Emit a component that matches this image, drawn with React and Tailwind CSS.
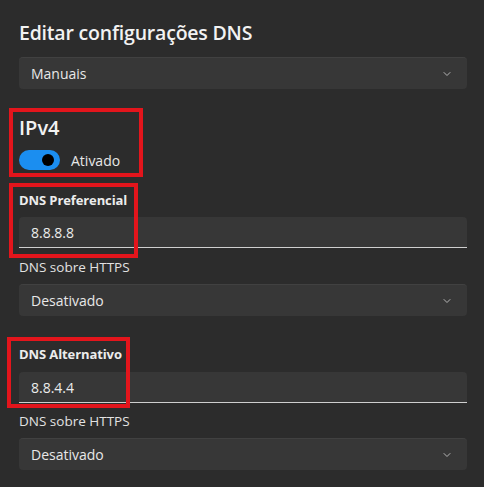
import { ChevronDown } from "lucide-react";

const font = { fontFamily: '"Open Sans", "Noto Sans", sans-serif' };

const Select = ({ value, className = "" }) => (
  <div
    className={`flex h-[32px] items-center justify-between rounded-[4px] border-t border-[#414141] bg-[#373737] pl-[12px] pr-[14px] text-[14px] text-[#e8e8e8] ${className}`}
  >
    <span>{value}</span>
    <ChevronDown size={12} strokeWidth={2} className="text-[#b5b5b5]" />
  </div>
);

const Field = ({ value, className = "" }) => (
  <div
    className={`flex h-[31px] items-center rounded-t-[4px] border-b border-[#cfcfcf] bg-[#373737] pl-[12px] text-[14px] text-[#ececec] ${className}`}
  >
    {value}
  </div>
);

// red annotation frames drawn over the screenshot
const Mark = ({ className }) => (
  <div className={`pointer-events-none absolute border-[4px] border-[#e3151c] ${className}`} />
);

export default function App() {
  return (
    <div
      className="relative h-[487px] w-[484px] overflow-hidden bg-[#2c2c2c] text-white"
      style={font}
    >
      <div className="flex flex-col pl-[19px] pr-[17px]">
        <h1 className="mt-[19px] h-[28px] text-[19.5px] font-semibold leading-[28px] tracking-[-0.2px] text-[#f2f2f2]">
          Editar configurações DNS
        </h1>
        <Select value="Manuais" className="mt-[10px]" />

        <div className="mt-[25px] h-[28px] text-[20px] font-semibold leading-[28px] text-[#f2f2f2]">
          IPv4
        </div>
        <div className="mt-[8px] flex h-[20px] items-center gap-[11px]">
          <div className="flex h-[20px] w-[41px] items-center justify-end rounded-full bg-[#1b8ef0] pr-[6px]">
            <div className="h-[12px] w-[12px] rounded-full bg-black" />
          </div>
          <span className="text-[14px] text-[#e8e8e8]">Ativado</span>
        </div>

        <div className="mt-[20px] h-[20px] text-[13px] font-bold leading-[20px] tracking-[-0.1px] text-[#ececec]">
          DNS Preferencial
        </div>
        <Field value="8.8.8.8" className="mt-[7px]" />
        <div className="mt-[9px] h-[20px] text-[13.5px] leading-[20px] text-[#e2e2e2]">
          DNS sobre HTTPS
        </div>
        <Select value="Desativado" className="mt-[7px]" />

        <div className="mt-[28px] h-[20px] text-[13px] font-bold leading-[20px] tracking-[-0.1px] text-[#ececec]">
          DNS Alternativo
        </div>
        <Field value="8.8.4.4" className="mt-[8px]" />
        <div className="mt-[8px] h-[20px] text-[13.5px] leading-[20px] text-[#e2e2e2]">
          DNS sobre HTTPS
        </div>
        <Select value="Desativado" className="mt-[7px]" />
      </div>

      <Mark className="left-[9px] top-[108px] h-[69px] w-[134px]" />
      <Mark className="left-[9px] top-[183px] h-[75px] w-[129px]" />
      <Mark className="left-[7px] top-[337px] h-[71px] w-[123px]" />
    </div>
  );
}
